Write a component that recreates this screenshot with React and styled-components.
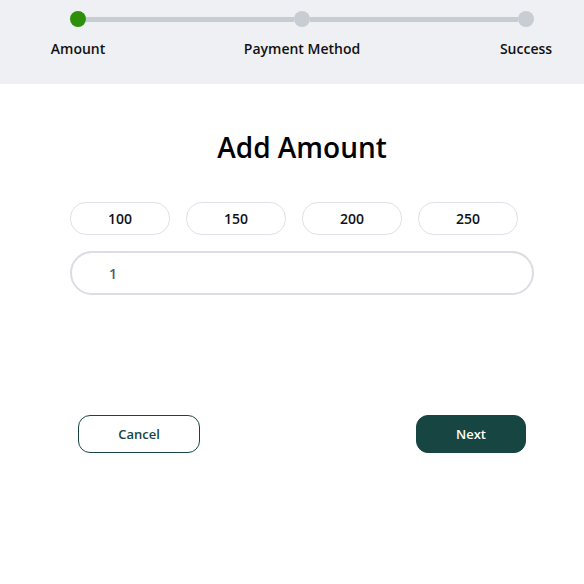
import React, { useState } from 'react';
import styled, { createGlobalStyle } from 'styled-components';

const GlobalStyle = createGlobalStyle`
  body {
    margin: 0;
    background: #ffffff;
    font-family: "Open Sans", "Liberation Sans", sans-serif;
    color: #000;
  }
`;

const Header = styled.header`
  background: #eff0f4;
  height: 84px;
  box-sizing: border-box;
  padding: 11px 0 0 70px;
`;

const Track = styled.div`
  display: flex;
  align-items: center;
  width: 464px;
`;

const Dot = styled.span`
  width: 16px;
  height: 16px;
  border-radius: 50%;
  flex-shrink: 0;
  background: ${({ active }) => (active ? '#2e8f0a' : '#c8ccd3')};
`;

const Segment = styled.span`
  flex: 1;
  height: 5px;
  background: #c8ccd3;
`;

const Labels = styled.div`
  display: flex;
  justify-content: space-between;
  width: 464px;
  margin-top: 12px;
`;

const LabelSlot = styled.div`
  width: 16px;
  display: flex;
  justify-content: center;
  white-space: nowrap;
  font-size: 14px;
  line-height: 20px;
  font-weight: 600;
  color: #111;
`;

const Content = styled.main`
  width: 464px;
  margin-left: 70px;
  display: flex;
  flex-direction: column;
`;

const Title = styled.h1`
  margin: 44px 0 0;
  font-size: 28px;
  line-height: 38px;
  font-weight: 600;
  text-align: center;
`;

const Presets = styled.div`
  display: grid;
  grid-template-columns: repeat(4, 100px);
  gap: 16px;
  margin-top: 36px;
`;

const PresetButton = styled.button`
  height: 33px;
  border: 1px solid #e0e0e8;
  border-radius: 16px;
  background: #fff;
  font-family: inherit;
  font-size: 14px;
  font-weight: 600;
  color: #111;
`;

const AmountInput = styled.input`
  margin-top: 16px;
  height: 44px;
  box-sizing: border-box;
  border: 2px solid #dcdce2;
  border-radius: 22px;
  padding: 0 0 0 37px;
  font-family: inherit;
  font-size: 14px;
  font-weight: 600;
  color: #555a63;
  outline: none;
`;

const Actions = styled.div`
  display: flex;
  justify-content: space-between;
  padding: 0 8px;
  margin-top: 120px;
`;

const ActionButton = styled.button`
  height: 38px;
  width: ${({ wide }) => (wide ? '122px' : '110px')};
  border-radius: 12px;
  font-family: inherit;
  font-size: 13px;
  font-weight: 600;
  border: 1px solid #174541;
  background: ${({ primary }) => (primary ? '#174541' : '#fff')};
  color: ${({ primary }) => (primary ? '#fff' : '#174541')};
`;

const steps = ['Amount', 'Payment Method', 'Success'];
const presets = [100, 150, 200, 250];

export default function App() {
  const [amount, setAmount] = useState('1');

  return (
    <>
      <GlobalStyle />
      <Header>
        <Track>
          <Dot active />
          <Segment />
          <Dot />
          <Segment />
          <Dot />
        </Track>
        <Labels>
          {steps.map((s) => (
            <LabelSlot key={s}>{s}</LabelSlot>
          ))}
        </Labels>
      </Header>
      <Content>
        <Title>Add Amount</Title>
        <Presets>
          {presets.map((p) => (
            <PresetButton key={p} onClick={() => setAmount(String(p))}>
              {p}
            </PresetButton>
          ))}
        </Presets>
        <AmountInput value={amount} onChange={(e) => setAmount(e.target.value)} />
        <Actions>
          <ActionButton wide>Cancel</ActionButton>
          <ActionButton primary>Next</ActionButton>
        </Actions>
      </Content>
    </>
  );
}
